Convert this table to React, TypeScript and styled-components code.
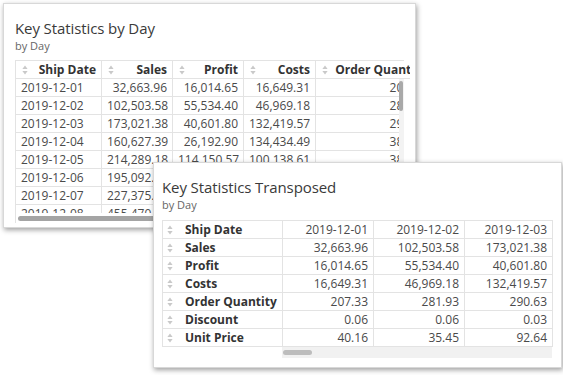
import styled, { createGlobalStyle } from 'styled-components';

const GlobalStyle = createGlobalStyle`
  html, body {
    margin: 0;
    padding: 0;
    background: #fff;
    font-family: "Open Sans", "Liberation Sans", sans-serif;
    color: #4a4a4a;
  }
`;

const Canvas = styled.div`
  position: relative;
  width: 563px;
  height: 375px;
  overflow: hidden;
  background: #fff;
`;

// the two widgets sit on a free canvas like windows, so they are placed by offsets
const Card = styled.div<{ $left: number; $top: number; $width: number; $height: number; $pad: number }>`
  position: absolute;
  left: ${(p) => p.$left}px;
  top: ${(p) => p.$top}px;
  width: ${(p) => p.$width}px;
  height: ${(p) => p.$height}px;
  box-sizing: border-box;
  padding: 13px ${(p) => p.$pad}px 0;
  background: #fff;
  border: 1px solid #d8d8d8;
  box-shadow: 1px 2px 5px rgba(0, 0, 0, 0.38);
  display: flex;
  flex-direction: column;
`;

const Title = styled.div`
  font-size: 15px;
  line-height: 22px;
  color: #3a3a3a;
  letter-spacing: -0.1px;
`;

const Subtitle = styled.div<{ $gap: number }>`
  font-size: 11px;
  line-height: 14px;
  color: #666;
  margin-bottom: ${(p) => p.$gap}px;
`;

const TableFrame = styled.div`
  display: flex;
  flex-direction: column;
  border-left: 1px solid #e3e3e3;
  border-top: 1px solid #e3e3e3;
`;

const Viewport = styled.div<{ $width: number; $height?: number }>`
  width: ${(p) => p.$width}px;
  height: ${(p) => (p.$height ? `${p.$height}px` : 'auto')};
  overflow: hidden;
`;

const Row = styled.div<{ $cols: string }>`
  display: grid;
  grid-template-columns: ${(p) => p.$cols};
  width: max-content;
`;

const Cell = styled.div<{ $align?: 'left' | 'right' }>`
  height: 18px;
  box-sizing: border-box;
  border-right: 1px solid #e3e3e3;
  border-bottom: 1px solid #e3e3e3;
  padding: 0 5px;
  font-size: 12px;
  line-height: 17px;
  white-space: nowrap;
  overflow: hidden;
  text-align: ${(p) => p.$align ?? 'right'};
`;

const HeadCell = styled(Cell)`
  display: flex;
  align-items: center;
  justify-content: space-between;
  font-weight: 700;
  color: #333;
  padding-left: 6px;
`;

const LabelCell = styled(Cell)`
  display: flex;
  align-items: center;
  gap: 12px;
  font-weight: 700;
  color: #333;
  padding-left: 4px;
`;

const BodyWrap = styled.div`
  display: flex;
`;

const VScroll = styled.div`
  width: 5px;
  background: #f3f3f3;
  display: flex;
  flex-direction: column;
  padding-top: 2px;
  box-sizing: border-box;
`;

const VThumb = styled.div`
  width: 4px;
  height: 30px;
  border-radius: 2px;
  background: #a9a9a9;
`;

const HScroll = styled.div<{ $width: number; $offset: number }>`
  width: ${(p) => p.$width}px;
  margin-left: ${(p) => p.$offset}px;
  height: 10px;
  display: flex;
  align-items: center;
`;

const HThumb = styled.div<{ $width: number; $color: string }>`
  width: ${(p) => p.$width}px;
  height: 5px;
  border-radius: 3px;
  background: ${(p) => p.$color};
`;

const TransFrame = styled.div`
  display: flex;
  border-left: 1px solid #e3e3e3;
  border-top: 1px solid #e3e3e3;
  width: max-content;
`;

const Column = styled.div`
  display: flex;
  flex-direction: column;
`;

const ScrollTrack = styled.div`
  width: 270px;
  height: 11px;
  background: #f1f1f1;
  display: flex;
  align-items: center;
  padding-left: 1px;
  box-sizing: border-box;
`;

const SortIcon = () => (
  <svg width="6" height="10" viewBox="0 0 6 10">
    <path d="M3 0.5 L5.6 4 H0.4 Z" fill="#c9c9c9" />
    <path d="M3 9.5 L5.6 6 H0.4 Z" fill="#c9c9c9" />
  </svg>
);

const dayCols = '86px 71px 71px 72px 117px';
const dayHeads = ['Ship Date', 'Sales', 'Profit', 'Costs', 'Order Quantity'];
const dayRows = [
  ['2019-12-01', '32,663.96', '16,014.65', '16,649.31', '207.33'],
  ['2019-12-02', '102,503.58', '55,534.40', '46,969.18', '281.93'],
  ['2019-12-03', '173,021.38', '40,601.80', '132,419.57', '290.63'],
  ['2019-12-04', '160,627.39', '26,192.90', '134,434.49', '383.58'],
  ['2019-12-05', '214,289.18', '114,150.57', '100,138.61', '385.12'],
  ['2019-12-06', '195,092.47', '68,310.22', '126,782.25', '341.70'],
  ['2019-12-07', '227,375.90', '74,905.16', '152,470.74', '366.08'],
  ['2019-12-08', '455,470.21', '130,662.85', '324,807.36', '512.44'],
];

const transCols = [
  ['2019-12-01', '32,663.96', '16,014.65', '16,649.31', '207.33', '0.06', '40.16'],
  ['2019-12-02', '102,503.58', '55,534.40', '46,969.18', '281.93', '0.06', '35.45'],
  ['2019-12-03', '173,021.38', '40,601.80', '132,419.57', '290.63', '0.03', '92.64'],
];
const transLabels = ['Ship Date', 'Sales', 'Profit', 'Costs', 'Order Quantity', 'Discount', 'Unit Price'];
const transWidths = [91, 91, 88];

const DailyTable = () => (
  <TableFrame>
    <Viewport $width={394}>
      <Row $cols={dayCols}>
        {dayHeads.map((h) => (
          <HeadCell key={h}>
            <SortIcon />
            {h}
          </HeadCell>
        ))}
      </Row>
    </Viewport>
    <BodyWrap>
      <Viewport $width={389} $height={134}>
        {dayRows.map((r) => (
          <Row key={r[0]} $cols={dayCols}>
            {r.map((v, i) => (
              <Cell key={i} $align={i === 0 ? 'left' : 'right'}>
                {v}
              </Cell>
            ))}
          </Row>
        ))}
      </Viewport>
      <VScroll>
        <VThumb />
      </VScroll>
    </BodyWrap>
    <HScroll $width={380} $offset={2}>
      <HThumb $width={250} $color="#a4a4a4" />
    </HScroll>
  </TableFrame>
);

const TransposedTable = () => (
  <>
    <TransFrame>
      <Column style={{ width: 120 }}>
        {transLabels.map((l) => (
          <LabelCell key={l}>
            <SortIcon />
            {l}
          </LabelCell>
        ))}
      </Column>
      {transCols.map((c, ci) => (
        <Column key={ci} style={{ width: transWidths[ci] }}>
          {c.map((v, i) => (
            <Cell key={i}>{v}</Cell>
          ))}
        </Column>
      ))}
    </TransFrame>
    <HScroll $width={270} $offset={120}>
      <ScrollTrack>
        <HThumb $width={29} $color="#bdbdbd" />
      </ScrollTrack>
    </HScroll>
  </>
);

export default function App() {
  return (
    <Canvas>
      <GlobalStyle />
      <Card $left={3} $top={3} $width={413} $height={225} $pad={11}>
        <Title>Key Statistics by Day</Title>
        <Subtitle $gap={7}>by Day</Subtitle>
        <DailyTable />
      </Card>
      <Card $left={153} $top={162} $width={409} $height={206} $pad={8}>
        <Title>Key Statistics Transposed</Title>
        <Subtitle $gap={8}>by Day</Subtitle>
        <TransposedTable />
      </Card>
    </Canvas>
  );
}
